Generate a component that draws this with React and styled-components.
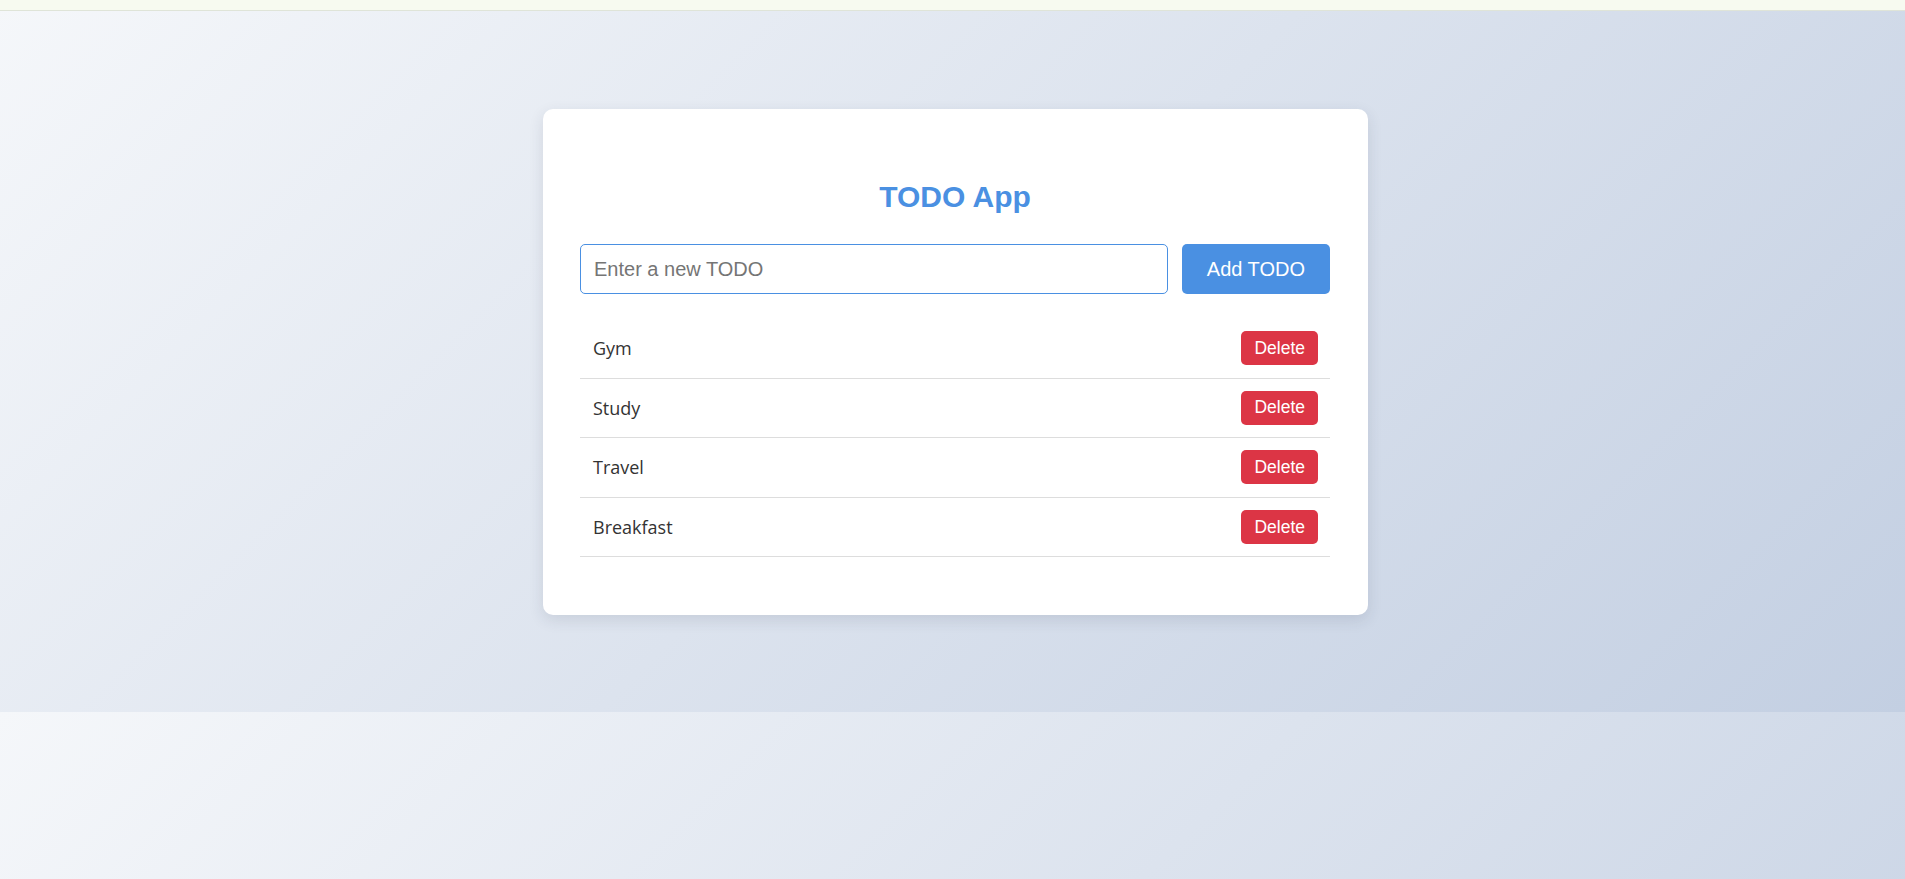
import React, { useState } from 'react';
import styled, { createGlobalStyle } from 'styled-components';

const GlobalStyle = createGlobalStyle`
  html {
    min-height: 100%;
    background: linear-gradient(135deg, #f5f7fa 0%, #c3cfe2 100%) 0 0 / 100% 712px repeat;
  }

  body {
    margin: 0;
    font-family: 'Liberation Sans', Arial, sans-serif;
  }

  * {
    box-sizing: border-box;
  }
`;

const TopBar = styled.div`
  height: 11px;
  background: #f7faf0;
  border-bottom: 1px solid #dfe4d8;
`;

const Page = styled.main`
  display: flex;
  justify-content: center;
  padding: 98px 0 98px 6px;
`;

const Card = styled.section`
  width: 825px;
  padding: 37px 38px 37px 37px;
  background: #fff;
  border-radius: 10px;
  box-shadow: 0 5px 15px rgba(40, 50, 70, 0.12);
`;

const Title = styled.h1`
  margin: 34px 0 30px;
  color: #4a90e2;
  font-size: 30px;
  font-weight: 700;
  text-align: center;
  line-height: normal;
`;

const Form = styled.form`
  display: flex;
  gap: 14px;
`;

const Input = styled.input`
  flex: 1;
  height: 50px;
  padding: 0 13px;
  border: 1px solid #4a90e2;
  border-radius: 5px;
  font-family: 'Liberation Sans', Arial, sans-serif;
  font-size: 20px;
  color: #333;
  outline: none;

  &::placeholder {
    color: #757575;
  }
`;

const Button = styled.button`
  border: none;
  border-radius: 5px;
  color: #fff;
  font-family: 'Liberation Sans', Arial, sans-serif;
  cursor: pointer;
  background: ${p => (p.$danger ? '#dc3545' : '#4a90e2')};
  font-size: ${p => (p.$danger ? '17.5px' : '20px')};
  height: ${p => (p.$danger ? '34px' : '50px')};
  padding: ${p => (p.$danger ? '0 13px' : '0 25px')};
`;

const List = styled.ul`
  list-style: none;
  margin: 25px 0 21px;
  padding: 0;
`;

const Item = styled.li`
  display: flex;
  align-items: center;
  justify-content: space-between;
  padding: 12.3px 12px 12.3px 13px;
  border-bottom: 1px solid #ddd;
  font-family: 'Open Sans', 'Noto Sans', sans-serif;
  font-size: 18px;
  color: #333;
`;

export default function App() {
  const [todos, setTodos] = useState(['Gym', 'Study', 'Travel', 'Breakfast']);
  const [text, setText] = useState('');

  const add = e => {
    e.preventDefault();
    if (!text.trim()) return;
    setTodos([...todos, text.trim()]);
    setText('');
  };

  return (
    <>
      <GlobalStyle />
      <TopBar />
      <Page>
        <Card>
          <Title>TODO App</Title>
          <Form onSubmit={add}>
            <Input
              placeholder="Enter a new TODO"
              value={text}
              onChange={e => setText(e.target.value)}
            />
            <Button type="submit">Add TODO</Button>
          </Form>
          <List>
            {todos.map((t, i) => (
              <Item key={i}>
                {t}
                <Button $danger onClick={() => setTodos(todos.filter((_, j) => j !== i))}>
                  Delete
                </Button>
              </Item>
            ))}
          </List>
        </Card>
      </Page>
    </>
  );
}
